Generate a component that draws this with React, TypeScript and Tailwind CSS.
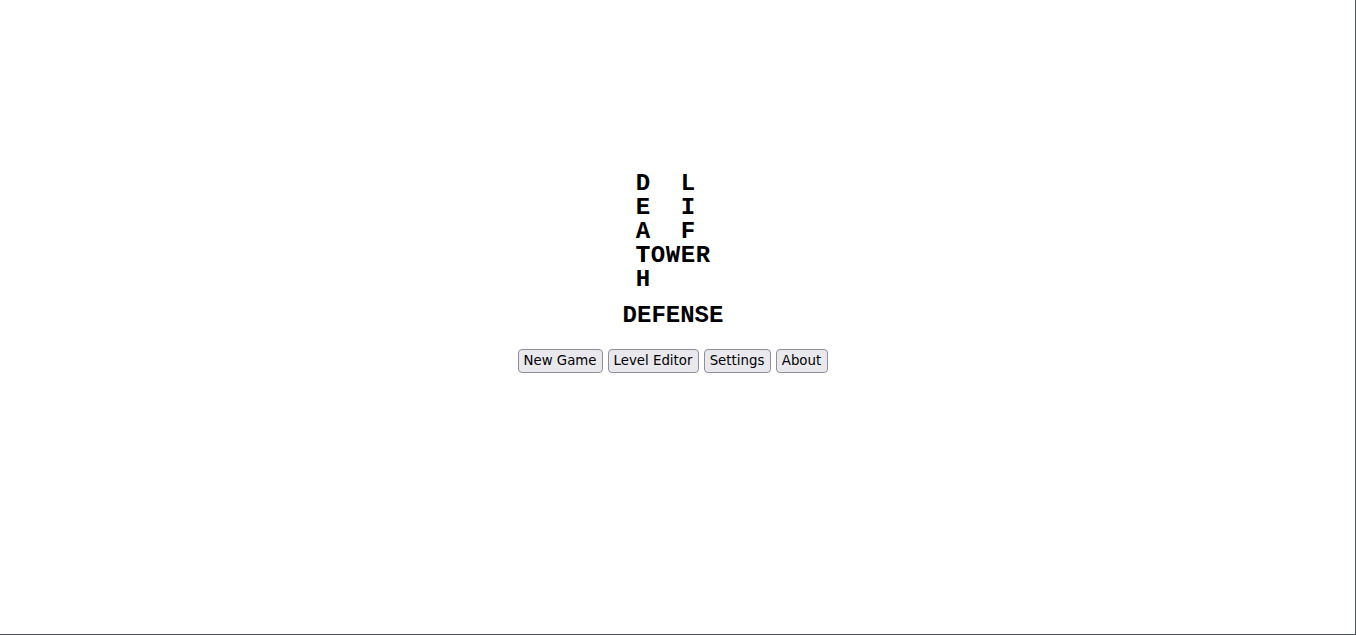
import React from "react";

const rows = ["D  L ", "E  I ", "A  F ", "TOWER", "H    "];

const buttons = [
  { label: "New Game", w: "w-[85px]" },
  { label: "Level Editor", w: "w-[91px]" },
  { label: "Settings", w: "w-[67px]" },
  { label: "About", w: "w-[52px]" },
];

export default function App() {
  return (
    <div className="h-[635px] w-[1356px] overflow-hidden border-r border-b border-[#4b5263] bg-white">
      <div className="flex flex-col items-center pt-[172px] pr-[10px]">
        {/* crossword title: DEATH down, LIFE down, TOWER across */}
        <div className="ml-[1px] grid grid-cols-[repeat(5,15px)] auto-rows-[24px] font-['Liberation_Mono',monospace] text-[24px] leading-[24px] font-bold text-black">
          {rows.flatMap((r, i) =>
            r.split("").map((ch, j) => (
              <span
                key={`${i}-${j}`}
                className={
                  i === 3 && j === 0
                    ? "text-center [text-shadow:0_0_0_#000]"
                    : "text-center"
                }
              >
                {ch === " " ? "\u00a0" : ch}
              </span>
            ))
          )}
        </div>

        <div className="mt-[12px] ml-[1px] font-['Liberation_Mono',monospace] text-[24px] leading-[24px] font-bold text-black">
          DEFENSE
        </div>

        <div className="mt-[21px] flex gap-[5px]">
          {buttons.map((b) => (
            <button
              key={b.label}
              className={`${b.w} h-[24px] rounded-[4px] border border-[#8f8f9d] bg-[#e9e9ed] text-center font-['DejaVu_Sans',sans-serif] text-[13.33px] leading-none text-black`}
            >
              {b.label}
            </button>
          ))}
        </div>
      </div>
    </div>
  );
}
